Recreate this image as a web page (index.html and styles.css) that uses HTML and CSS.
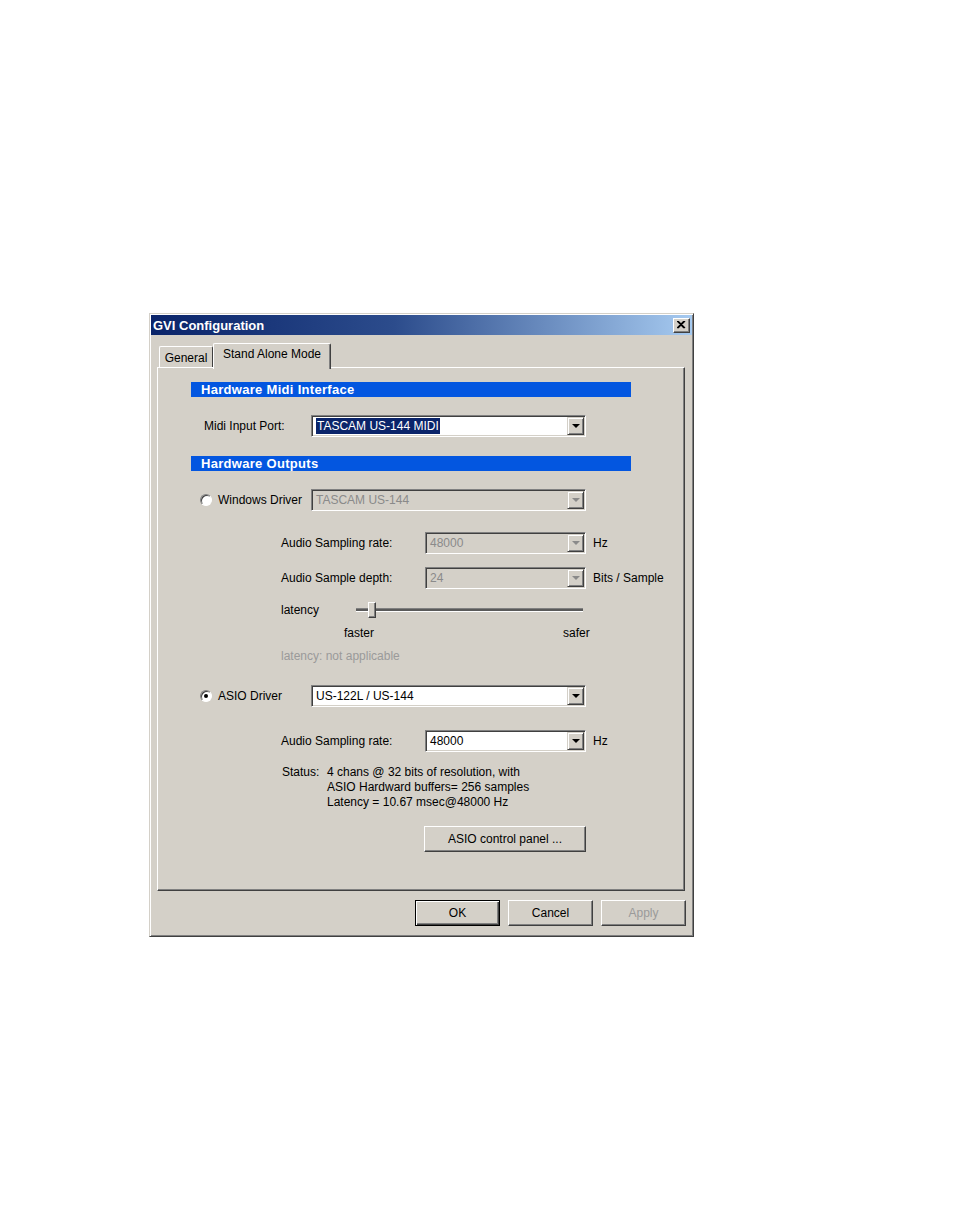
FILE: index.html
```html
<!DOCTYPE html>
<html lang="en">
<head>
  <meta charset="UTF-8" />
  <title>GVI Configuration</title>
  <link rel="stylesheet" href="styles.css">
</head>
<body>

  <div class="dialog">
    <div class="titlebar">
      <span class="title">GVI Configuration</span>
      <span class="close">
        <svg width="9" height="8" viewBox="0 0 9 8">
          <path d="M1 0 L8 7 M0 0 L7 7 M8 0 L1 7 M7 0 L0 7" stroke="#000" stroke-width="1.2" />
        </svg>
      </span>
    </div>

    <div class="tabs">
      <div class="tab">General</div>
      <div class="tab active">Stand Alone Mode</div>
    </div>

    <div class="panel">
      <div class="bar">Hardware Midi Interface</div>

      <div class="row midi-row">
        <span class="label midi-label">Midi Input Port:</span>
        <div class="combo wide">
          <span class="value"><span class="selected">TASCAM US-144 MIDI</span></span>
          <span class="drop"><i class="arrow"></i></span>
        </div>
      </div>

      <div class="bar bar2">Hardware Outputs</div>

      <div class="row driver-row">
        <span class="radio"></span>
        <span class="label driver-label">Windows Driver</span>
        <div class="combo wide disabled">
          <span class="value">TASCAM US-144</span>
          <span class="drop"><i class="arrow"></i></span>
        </div>
      </div>

      <div class="row indent sampling-row">
        <span class="label field-label">Audio Sampling rate:</span>
        <div class="combo narrow disabled">
          <span class="value">48000</span>
          <span class="drop"><i class="arrow"></i></span>
        </div>
        <span class="unit">Hz</span>
      </div>

      <div class="row indent depth-row">
        <span class="label field-label">Audio Sample depth:</span>
        <div class="combo narrow disabled">
          <span class="value">24</span>
          <span class="drop"><i class="arrow"></i></span>
        </div>
        <span class="unit">Bits / Sample</span>
      </div>

      <div class="row indent slider-row">
        <span class="label slider-label">latency</span>
        <div class="track">
          <span class="thumb"></span>
        </div>
      </div>

      <div class="ticks">
        <span class="faster">faster</span>
        <span>safer</span>
      </div>

      <div class="note">latency: not applicable</div>

      <div class="row driver-row asio-row">
        <span class="radio checked"></span>
        <span class="label driver-label">ASIO Driver</span>
        <div class="combo wide">
          <span class="value">US-122L / US-144</span>
          <span class="drop"><i class="arrow"></i></span>
        </div>
      </div>

      <div class="row indent asio-rate">
        <span class="label field-label">Audio Sampling rate:</span>
        <div class="combo narrow">
          <span class="value">48000</span>
          <span class="drop"><i class="arrow"></i></span>
        </div>
        <span class="unit">Hz</span>
      </div>

      <div class="status">
        <span class="status-label">Status:</span>
        <div class="status-lines">
          <div>4 chans @ 32 bits of resolution, with</div>
          <div>ASIO Hardward buffers= 256 samples</div>
          <div>Latency = 10.67 msec@48000 Hz</div>
        </div>
      </div>

      <button class="button asio-button" type="button">ASIO control panel ...</button>
    </div>

    <div class="buttons">
      <button class="button default" type="button">OK</button>
      <button class="button" type="button">Cancel</button>
      <button class="button" type="button" disabled>Apply</button>
    </div>
  </div>

</body>
</html>
```

FILE: styles.css
```css
body {
  margin: 0;
  background: #fff;
  font-family: "Liberation Sans", Arial, sans-serif;
  font-size: 12px;
  color: #000;
}
.dialog {
  box-sizing: border-box;
  width: 545px;
  height: 624px;
  margin: 313px 0 0 149px;
  padding: 1px;
  background: #d4d0c8;
  border: 1px solid;
  border-color: #d4d0c8 #404040 #404040 #d4d0c8;
  box-shadow: inset 1px 1px #fff, inset -1px -1px #808080;
}
.titlebar {
  height: 20px;
  display: flex;
  align-items: center;
  justify-content: space-between;
  padding: 0 2px 0 2px;
  background: linear-gradient(to right, #0a246a, #2c4c8c 45%, #a6caf0);
}
.title {
  color: #fff;
  font-weight: bold;
  font-size: 13px;
}
.close {
  box-sizing: border-box;
  width: 17px;
  height: 15px;
  display: flex;
  align-items: center;
  justify-content: center;
  background: #d4d0c8;
  border: 1px solid;
  border-color: #fff #404040 #404040 #fff;
  box-shadow: inset -1px -1px #808080;
}
.tabs {
  display: flex;
  align-items: flex-end;
  height: 24px;
  margin: 8px 0 0 6px;
}
.tab {
  box-sizing: border-box;
  width: 54px;
  height: 21px;
  margin-left: 2px;
  padding-top: 4px;
  text-align: center;
  border: 1px solid;
  border-bottom: none;
  border-color: #fff #404040 #fff #fff;
  border-radius: 2px 2px 0 0;
  background: #d4d0c8;
}
.tab.active {
  width: 118px;
  height: 26px;
  margin: 0 0 -2px 0;
  padding-top: 3px;
  z-index: 1;
  box-shadow: inset -1px 0 #808080;
}
.panel {
  box-sizing: border-box;
  width: 528px;
  height: 524px;
  margin-left: 6px;
  padding: 14px 0 0 33px;
  border: 1px solid;
  border-color: #fff #404040 #404040 #fff;
  box-shadow: inset -1px -1px #808080;
}
.bar {
  width: 440px;
  height: 15px;
  line-height: 15px;
  padding-left: 10px;
  box-sizing: border-box;
  background: #0356e0;
  color: #fff;
  font-weight: bold;
  font-size: 13px;
  letter-spacing: 0.3px;
}
.bar2 {
  margin-top: 19px;
}
.row {
  display: flex;
  align-items: center;
  height: 22px;
}
.label {
  flex: none;
}
.midi-row {
  margin-top: 18px;
  padding-left: 13px;
}
.midi-label {
  width: 107px;
}
.driver-row {
  margin-top: 18px;
  padding-left: 9px;
}
.driver-label {
  width: 93px;
  margin-left: 6px;
}
.indent {
  padding-left: 90px;
}
.field-label {
  width: 144px;
}
.sampling-row {
  margin-top: 21px;
}
.depth-row {
  margin-top: 13px;
}
.asio-row {
  margin-top: 22px;
}
.asio-rate {
  margin-top: 23px;
}
.unit {
  margin-left: 7px;
}
.combo {
  box-sizing: border-box;
  height: 22px;
  display: flex;
  align-items: center;
  justify-content: space-between;
  background: #fff;
  border: 1px solid;
  border-color: #808080 #fff #fff #808080;
  box-shadow: inset 1px 1px #404040, inset -1px -1px #d4d0c8;
}
.combo.wide {
  width: 275px;
}
.combo.narrow {
  width: 161px;
}
.combo.disabled {
  background: #d4d0c8;
  color: #8a8a8a;
}
.value {
  padding-left: 4px;
  white-space: nowrap;
}
.selected {
  background: #0a246a;
  color: #fff;
  padding: 1px 1px;
}
.drop {
  box-sizing: border-box;
  width: 17px;
  height: 18px;
  margin-right: 1px;
  display: flex;
  align-items: center;
  justify-content: center;
  background: #d4d0c8;
  border: 1px solid;
  border-color: #d4d0c8 #404040 #404040 #d4d0c8;
  box-shadow: inset 1px 1px #fff, inset -1px -1px #808080;
}
.arrow {
  width: 0;
  height: 0;
  border-left: 4px solid transparent;
  border-right: 4px solid transparent;
  border-top: 4px solid #000;
}
.disabled .arrow {
  border-top-color: #8a8a8a;
}
.radio {
  box-sizing: border-box;
  width: 12px;
  height: 12px;
  flex: none;
  border-radius: 50%;
  border: 1px solid;
  border-color: #808080 #fff #fff #808080;
  box-shadow: inset 1px 1px #404040;
  background: #fff;
  display: flex;
  align-items: center;
  justify-content: center;
}
.radio.checked::after {
  content: "";
  width: 4px;
  height: 4px;
  border-radius: 50%;
  background: #000;
}
.slider-row {
  margin-top: 11px;
  height: 20px;
}
.slider-label {
  width: 75px;
}
.track {
  position: relative;
  width: 227px;
  height: 2px;
  border-top: 1px solid #808080;
  background: #5a5a5a;
  border-bottom: 1px solid #fff;
}
.thumb {
  position: absolute;
  left: 12px;
  top: -7px;
  box-sizing: border-box;
  width: 8px;
  height: 16px;
  background: #d4d0c8;
  border: 1px solid;
  border-color: #fff #404040 #404040 #fff;
  box-shadow: inset -1px -1px #808080;
}
.ticks {
  display: flex;
  margin-top: 6px;
  padding-left: 153px;
  line-height: 14px;
}
.faster {
  width: 219px;
}
.note {
  margin-top: 9px;
  padding-left: 90px;
  line-height: 14px;
  color: #9a9a9a;
}
.status {
  display: flex;
  margin-top: 13px;
  padding-left: 91px;
  line-height: 15px;
}
.status-label {
  width: 45px;
}
.button {
  box-sizing: border-box;
  height: 26px;
  font-family: "Liberation Sans", Arial, sans-serif;
  font-size: 12px;
  color: #000;
  background: #d4d0c8;
  border: 1px solid;
  border-color: #fff #404040 #404040 #fff;
  box-shadow: inset -1px -1px #808080;
  padding: 0;
}
.button:disabled {
  color: #9a9a9a;
}
.asio-button {
  width: 162px;
  margin: 16px 0 0 233px;
}
.buttons {
  display: flex;
  justify-content: flex-end;
  gap: 8px;
  margin: 9px 6px 0 0;
}
.buttons .button {
  width: 85px;
}
.button.default {
  border-color: #000;
  box-shadow: inset 1px 1px #fff, inset -1px -1px #404040, inset -2px -2px #808080;
}
```
